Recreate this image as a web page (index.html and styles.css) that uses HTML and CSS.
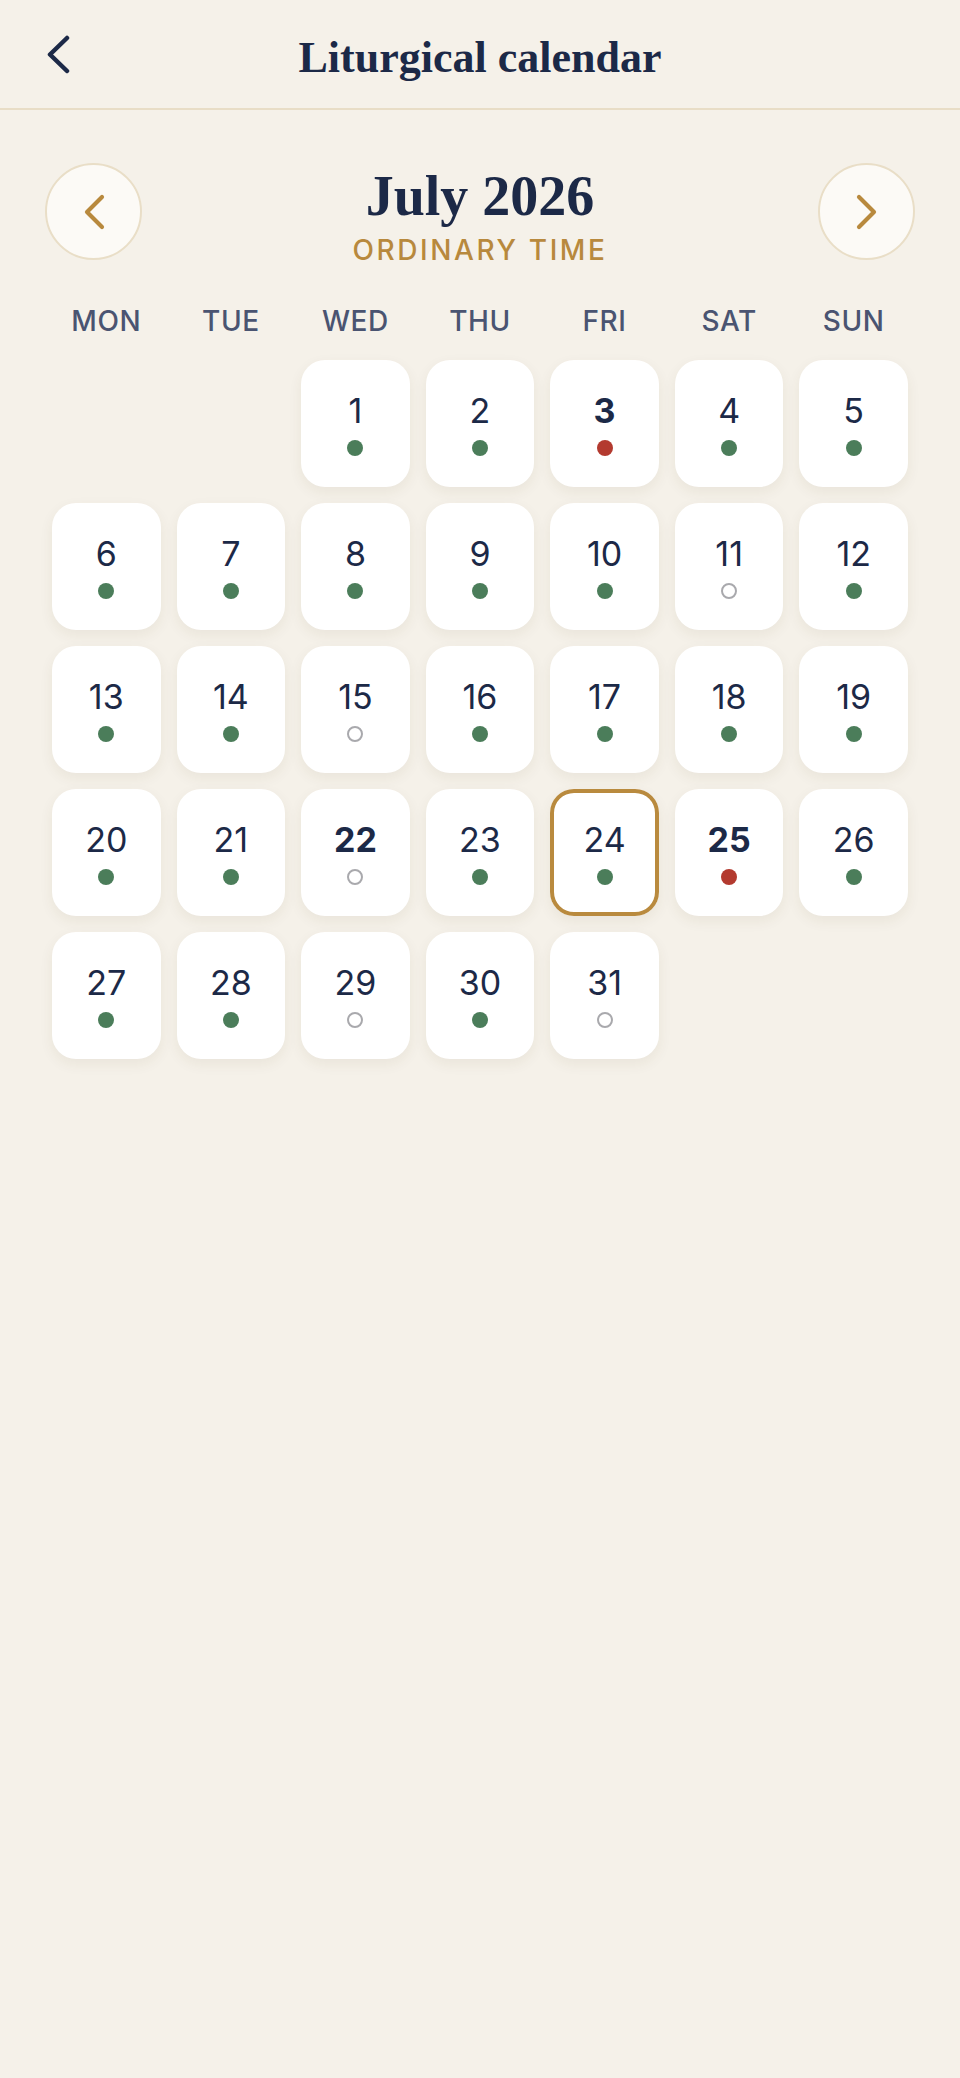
FILE: index.html
```html
<!DOCTYPE html>
<html lang="en">
<head>
    <meta charset="UTF-8">
    <meta name="viewport" content="width=device-width, initial-scale=1.0">
    <title>Liturgical calendar</title>
    <link rel="stylesheet" href="styles.css">
</head>
<body>

    <header class="topbar">
        <button class="backButton" aria-label="Back">
            <svg width="26" height="40" viewBox="0 0 26 40">
                <path d="M21 4 L4 20.5 L21 37" fill="none" stroke="#1c2947" stroke-width="4.5" stroke-linecap="round" stroke-linejoin="round"/>
            </svg>
        </button>
        <div class="title">Liturgical calendar</div>
        <div></div>
    </header>

    <section class="monthNav">
        <button class="navCircle" aria-label="Previous month">
            <svg width="24" height="36" viewBox="0 0 24 36">
                <path d="M20 3 L5 18 L20 33" fill="none" stroke="#b8893d" stroke-width="4.2" stroke-linecap="round" stroke-linejoin="round"/>
            </svg>
        </button>
        <div class="monthHeading">
            <div class="monthName">July 2026</div>
            <div class="season">ORDINARY TIME</div>
        </div>
        <button class="navCircle" aria-label="Next month">
            <svg width="24" height="36" viewBox="0 0 24 36">
                <path d="M4 3 L19 18 L4 33" fill="none" stroke="#b8893d" stroke-width="4.2" stroke-linecap="round" stroke-linejoin="round"/>
            </svg>
        </button>
    </section>

    <div class="weekdays">
        <div>MON</div>
        <div>TUE</div>
        <div>WED</div>
        <div>THU</div>
        <div>FRI</div>
        <div>SAT</div>
        <div>SUN</div>
    </div>

    <div class="days">
        <!-- July 2026 starts on a Wednesday -->
        <div class="blank"></div>
        <div class="blank"></div>
        <div class="day"><span class="num">1</span><span class="dot green"></span></div>
        <div class="day"><span class="num">2</span><span class="dot green"></span></div>
        <div class="day feast"><span class="num">3</span><span class="dot red"></span></div>
        <div class="day"><span class="num">4</span><span class="dot green"></span></div>
        <div class="day"><span class="num">5</span><span class="dot green"></span></div>

        <div class="day"><span class="num">6</span><span class="dot green"></span></div>
        <div class="day"><span class="num">7</span><span class="dot green"></span></div>
        <div class="day"><span class="num">8</span><span class="dot green"></span></div>
        <div class="day"><span class="num">9</span><span class="dot green"></span></div>
        <div class="day"><span class="num">10</span><span class="dot green"></span></div>
        <div class="day"><span class="num">11</span><span class="dot white"></span></div>
        <div class="day"><span class="num">12</span><span class="dot green"></span></div>

        <div class="day"><span class="num">13</span><span class="dot green"></span></div>
        <div class="day"><span class="num">14</span><span class="dot green"></span></div>
        <div class="day"><span class="num">15</span><span class="dot white"></span></div>
        <div class="day"><span class="num">16</span><span class="dot green"></span></div>
        <div class="day"><span class="num">17</span><span class="dot green"></span></div>
        <div class="day"><span class="num">18</span><span class="dot green"></span></div>
        <div class="day"><span class="num">19</span><span class="dot green"></span></div>

        <div class="day"><span class="num">20</span><span class="dot green"></span></div>
        <div class="day"><span class="num">21</span><span class="dot green"></span></div>
        <div class="day feast"><span class="num">22</span><span class="dot white"></span></div>
        <div class="day"><span class="num">23</span><span class="dot green"></span></div>
        <div class="day selected"><span class="num">24</span><span class="dot green"></span></div>
        <div class="day feast"><span class="num">25</span><span class="dot red"></span></div>
        <div class="day"><span class="num">26</span><span class="dot green"></span></div>

        <div class="day"><span class="num">27</span><span class="dot green"></span></div>
        <div class="day"><span class="num">28</span><span class="dot green"></span></div>
        <div class="day"><span class="num">29</span><span class="dot white"></span></div>
        <div class="day"><span class="num">30</span><span class="dot green"></span></div>
        <div class="day"><span class="num">31</span><span class="dot white"></span></div>
    </div>

</body>
</html>
```

FILE: styles.css
```css
body {
    margin: 0;
    min-height: 100vh;
    background-color: #f5f1e9;
    font-family: Inter, "Noto Sans", sans-serif;
    color: #1c2947;
}

button {
    border: none;
    background: none;
    padding: 0;
    cursor: pointer;
}

/* top bar */
.topbar {
    display: grid;
    grid-template-columns: 1fr auto 1fr;
    align-items: center;
    height: 108px;
    padding: 0 46px;
    border-bottom: 2px solid #e8ddc6;
}

.backButton {
    display: flex;
    width: 40px;
    height: 40px;
    align-items: center;
}

.title {
    font-family: "Liberation Serif", serif;
    font-weight: bold;
    font-size: 44px;
    padding-top: 6px;
    color: #1c2947;
}

/* month navigation */
.monthNav {
    display: flex;
    justify-content: space-between;
    align-items: flex-start;
    margin-top: 53px;
    padding: 0 45px;
}

.navCircle {
    width: 97px;
    height: 97px;
    border-radius: 50%;
    box-sizing: border-box;
    border: 2px solid #e9dec7;
    background-color: #fcfaf6;
    display: flex;
    align-items: center;
    justify-content: center;
}

.monthHeading {
    margin-top: 3px;
    text-align: center;
}

.monthName {
    font-family: "Liberation Serif", serif;
    font-weight: bold;
    font-size: 56px;
    line-height: 60px;
    color: #1c2947;
}

.season {
    margin-top: 7px;
    font-size: 28px;
    line-height: 34px;
    font-weight: 500;
    letter-spacing: 2.6px;
    color: #b8893d;
}

/* calendar grid */
.weekdays,
.days {
    display: grid;
    grid-template-columns: repeat(7, 1fr);
    column-gap: 16px;
    padding: 0 52px;
}

.weekdays {
    margin-top: 37px;
    font-size: 28px;
    line-height: 34px;
    font-weight: 500;
    letter-spacing: 0.6px;
    text-align: center;
    color: #4a5471;
}

.days {
    margin-top: 22px;
    row-gap: 16px;
}

.day {
    height: 127px;
    box-sizing: border-box;
    padding-top: 31px;
    display: flex;
    flex-direction: column;
    align-items: center;
    background-color: white;
    border-radius: 24px;
    box-shadow: 0 5px 14px rgba(90, 70, 30, 0.07);
}

.day.selected {
    box-shadow: inset 0 0 0 4px #b98a3e, 0 5px 14px rgba(90, 70, 30, 0.07);
}

.num {
    font-size: 34px;
    line-height: 40px;
    color: #1c2947;
}

.feast .num {
    font-weight: bold;
}

.dot {
    width: 16px;
    height: 16px;
    margin-top: 9px;
    border-radius: 50%;
    box-sizing: border-box;
}

.dot.green {
    background-color: #4b7d5a;
}

.dot.red {
    background-color: #b33a2f;
}

.dot.white {
    background-color: white;
    border: 2px solid #a9a9ad;
}
```
